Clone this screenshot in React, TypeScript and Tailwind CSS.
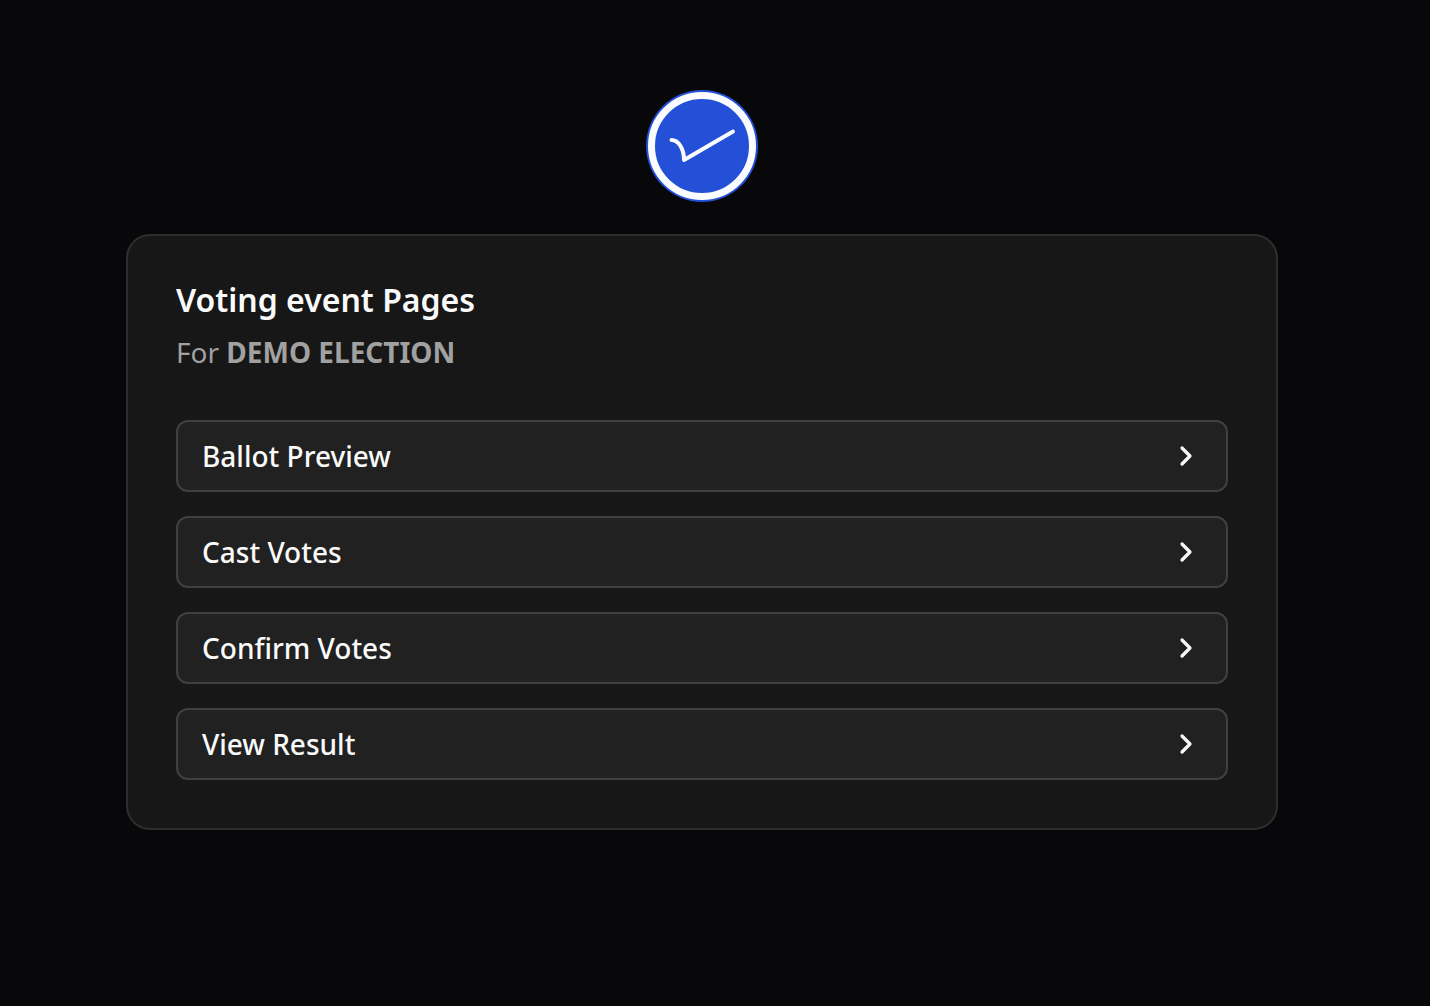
import { ChevronRight } from "lucide-react";

const pages = [
  { label: "Ballot Preview", href: "#ballot-preview" },
  { label: "Cast Votes", href: "#cast-votes" },
  { label: "Confirm Votes", href: "#confirm-votes" },
  { label: "View Result", href: "#view-result" },
];

function Logo() {
  return (
    <svg viewBox="0 0 112 112" className="size-28" fill="none" role="img" aria-label="Logo">
      <circle cx="56" cy="56" r="56" fill="#2450d8" />
      <circle cx="56" cy="56" r="50.5" stroke="#fafcff" strokeWidth="7" />
      <path
        d="M25.5 50C32 50 38 58 38 70L87 41.5"
        stroke="#fafcff"
        strokeWidth="4"
        strokeLinecap="round"
        strokeLinejoin="round"
      />
    </svg>
  );
}

export default function App() {
  return (
    <div className="min-h-screen bg-[#08080b] font-['Noto_Sans',sans-serif] text-[#fafafa]">
      <main className="flex flex-col items-center gap-8 pt-[90px] pr-[152px] pb-16 pl-[126px]">
        <Logo />
        <section className="w-full rounded-3xl border-2 border-[#2e2e2e] bg-[#171717] p-12">
          <h1 className="text-[32px] leading-8 font-semibold">Voting event Pages</h1>
          <p className="mt-4 text-[28px] leading-10 text-[#a1a1a1]">
            For <strong className="font-bold">DEMO ELECTION</strong>
          </p>
          <nav className="mt-12 flex flex-col gap-6">
            {pages.map((page) => (
              <a
                key={page.label}
                href={page.href}
                className="flex h-[72px] items-center justify-between rounded-xl border-2 border-[#404040] bg-[#212121] px-6 text-[28px] font-medium"
              >
                {page.label}
                <ChevronRight size={32} strokeWidth={2.4} />
              </a>
            ))}
          </nav>
        </section>
      </main>
    </div>
  );
}
